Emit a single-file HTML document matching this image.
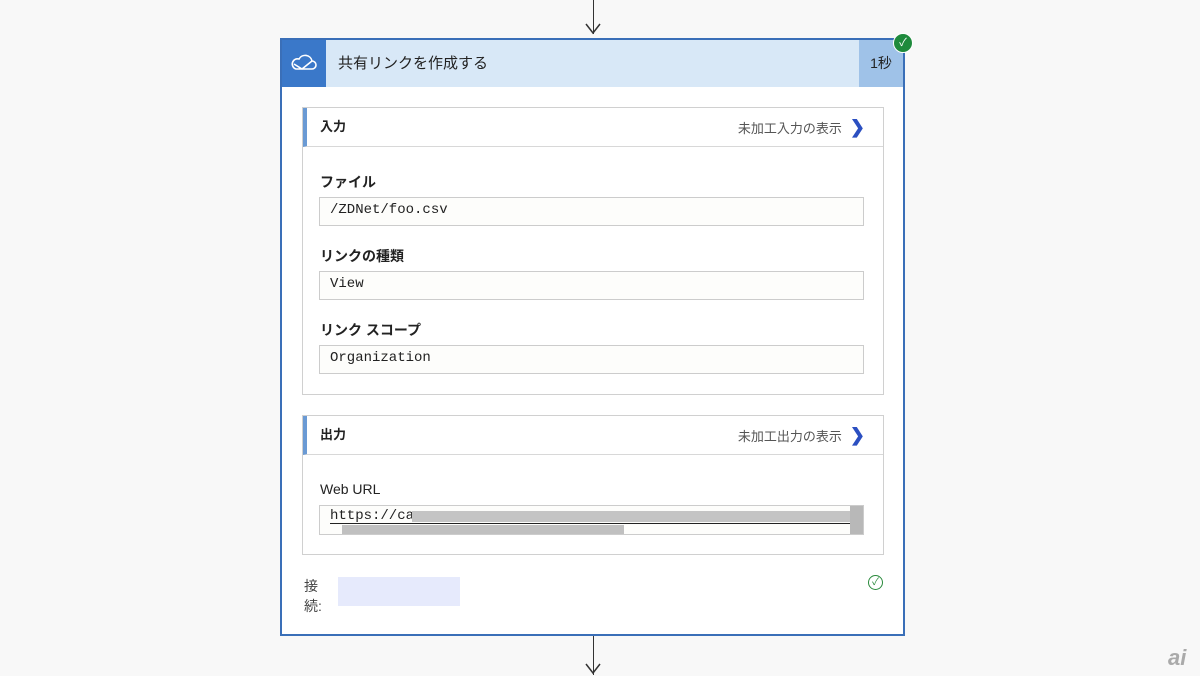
<!DOCTYPE html><html><head><meta charset="utf-8"><style>
body{margin:0;width:1200px;height:675px;background:#f8f8f8;position:relative;overflow:hidden;font-family:"Liberation Sans","Noto Sans CJK JP",sans-serif;}
.a{position:absolute}
.card{left:280px;top:38px;width:625px;height:598px;background:#fff;border:2px solid #3a6fb8;box-sizing:border-box}
.hdr{left:0;top:0;width:621px;height:47px;background:#d8e8f7}
.sec{position:absolute;left:20px;width:580px;border:1px solid #d0d0d0;background:#fff}
.sh{height:38px;border-bottom:1px solid #d8d8d8;border-left:4px solid #6a9ad4;position:relative;font-size:13px;font-weight:bold;line-height:38px;padding-left:13px;color:#222}
.raw{position:absolute;right:18px;top:0;font-weight:normal;color:#555;font-size:13px}
.raw b{color:#2b4fc1;font-size:18px;margin-left:8px;font-weight:bold}
.lbl{position:absolute;left:17px;font-size:14px;font-weight:bold;color:#222}
.inp{position:absolute;left:16px;width:545px;height:29px;border:1px solid #ccc;background:#fdfdfb;font-family:"Liberation Mono",monospace;font-size:14px;line-height:24px;padding-left:10px;box-sizing:border-box;color:#222}
</style></head><body>
<div class="a" style="left:593px;top:0;width:1px;height:34px;background:#333"></div>
<svg class="a" style="left:584px;top:22px" width="18" height="14"><path d="M2 2l7 9 7-9" stroke="#333" fill="none" stroke-width="1.5"/></svg>
<div class="a" style="left:593px;top:636px;width:1px;height:39px;background:#333"></div>
<svg class="a" style="left:584px;top:662px" width="18" height="14"><path d="M2 2l7 9 7-9" stroke="#333" fill="none" stroke-width="1.5"/></svg>
<div class="a card">
 <div class="a hdr"></div>
 <div class="a" style="left:0;top:0;width:44px;height:47px;background:#3a78c9"></div>
 <svg class="a" style="left:8px;top:12px" width="28" height="22"><path d="M6 17h16a4 4 0 0 0 0-8 7 7 0 0 0-13-2 5 5 0 0 0-3 10z M4 12l8 5 10-8" stroke="#fff" fill="none" stroke-width="1.6"/></svg>
 <div class="a" style="left:56px;top:12px;font-size:15px;color:#222">共有リンクを作成する</div>
 <div class="a" style="left:577px;top:0;width:44px;height:47px;background:#9fc2e8;font-size:14px;line-height:47px;text-align:center;color:#222">1秒</div>
 <div class="a" style="left:611px;top:-7px;width:18px;height:18px;border-radius:50%;background:#1e8a3c;border:1px solid #fff;color:#fff;font-size:11px;text-align:center;line-height:18px">✓</div>
 <div class="sec" style="top:67px;height:286px">
  <div class="sh">入力<span class="raw">未加工入力の表示<b>❯</b></span></div>
  <div class="lbl" style="top:64px">ファイル</div>
  <div class="inp" style="top:89px">/ZDNet/foo.csv</div>
  <div class="lbl" style="top:138px">リンクの種類</div>
  <div class="inp" style="top:163px">View</div>
  <div class="lbl" style="top:212px">リンク スコープ</div>
  <div class="inp" style="top:237px">Organization</div>
 </div>
 <div class="sec" style="top:375px;height:138px">
  <div class="sh">出力<span class="raw">未加工出力の表示<b>❯</b></span></div>
  <div class="lbl" style="top:65px;font-weight:normal">Web URL</div>
  <div class="inp" style="top:89px;height:30px;overflow:hidden;line-height:20px">https://ca
   <div class="a" style="left:92px;top:5px;width:440px;height:11px;background:#c4c4c4"></div>
   <div class="a" style="left:10px;top:17px;width:520px;height:1px;background:#222"></div>
   <div class="a" style="left:22px;top:19px;width:282px;height:9px;background:#c0c0c0"></div>
   <div class="a" style="left:530px;top:0;width:14px;height:28px;background:#b8b8b8"></div>
  </div>
 </div>
 <div class="a" style="left:22px;top:536px;font-size:14px;color:#444;line-height:20px">接<br>続:</div>
 <div class="a" style="left:56px;top:537px;width:122px;height:29px;background:#e6eafc"></div>
 <div class="a" style="left:586px;top:535px;width:13px;height:13px;border:1px solid #2a8a3c;border-radius:50%;color:#2a8a3c;font-size:10px;text-align:center;line-height:13px">✓</div>
</div>
<div class="a" style="left:1168px;top:645px;font-size:22px;font-style:italic;color:#aaa;font-weight:bold">ai</div>
</body></html>
